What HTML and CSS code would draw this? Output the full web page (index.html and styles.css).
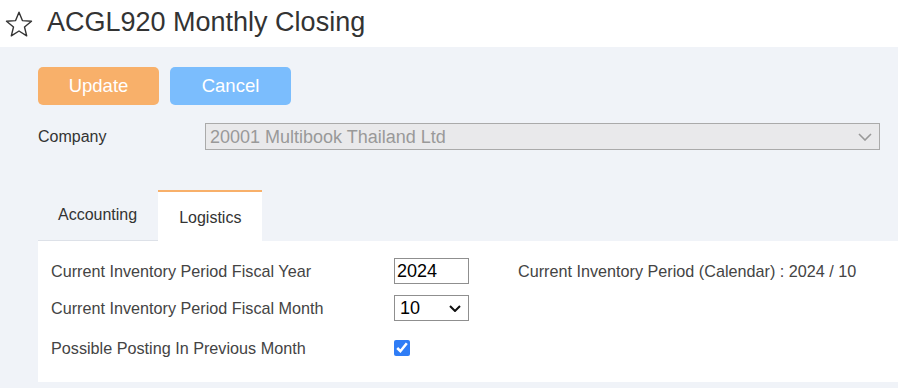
FILE: index.html
```html
<!DOCTYPE html>
<html lang="en">
<head>
    <meta charset="UTF-8">
    <title>ACGL920 Monthly Closing</title>
    <link rel="stylesheet" href="styles.css">
</head>
<body>
    <header class="page-header">
        <svg class="star" width="28" height="26" viewBox="0 0 28 26">
            <path d="M14 1.2 L17.4 9.6 L26.5 10.2 L19.5 16 L21.7 24.8 L14 20 L6.3 24.8 L8.5 16 L1.5 10.2 L10.6 9.6 Z" fill="none" stroke="#333" stroke-width="1.4" stroke-linejoin="round"/>
        </svg>
        <h1>ACGL920 Monthly Closing</h1>
    </header>

    <main class="content">
        <div class="toolbar">
            <button class="btn btn-update">Update</button>
            <button class="btn btn-cancel">Cancel</button>
        </div>

        <div class="company-row">
            <label class="company-label">Company</label>
            <div class="select-wrap company-wrap">
                <select class="company-select" disabled>
                    <option>20001 Multibook Thailand Ltd</option>
                </select>
                <svg class="chevron" width="14" height="8" viewBox="0 0 14 8">
                    <path d="M1 1 L7 7 L13 1" fill="none" stroke="#999" stroke-width="1.6"/>
                </svg>
            </div>
        </div>

        <div class="tabs">
            <div class="tab">Accounting</div>
            <div class="tab active">Logistics</div>
            <div class="tab-rest"></div>
        </div>

        <div class="panel">
            <div class="form-row">
                <span class="form-label">Current Inventory Period Fiscal Year</span>
                <input class="year-input" type="text" value="2024">
                <span class="calendar-info">Current Inventory Period (Calendar) : 2024 / 10</span>
            </div>
            <div class="form-row">
                <span class="form-label">Current Inventory Period Fiscal Month</span>
                <div class="select-wrap">
                    <select class="month-select">
                        <option>10</option>
                    </select>
                    <svg class="chevron month-chevron" width="12" height="7" viewBox="0 0 12 7">
                        <path d="M1 1 L6 6 L11 1" fill="none" stroke="#111" stroke-width="2"/>
                    </svg>
                </div>
            </div>
            <div class="form-row check-row">
                <span class="form-label">Possible Posting In Previous Month</span>
                <input class="posting-check" type="checkbox" checked>
            </div>
        </div>
    </main>
</body>
</html>
```

FILE: styles.css
```css
/* Reset */
body, h1 {
    margin: 0;
    padding: 0;
}

body {
    font-family: "Liberation Sans", Arial, sans-serif;
    color: #333;
    background-color: #f0f3f8;
    overflow: hidden;
}

/* Header */
.page-header {
    background-color: #fff;
    height: 47px;
    display: flex;
    align-items: center;
    padding-left: 5px;
}

.page-header h1 {
    font-size: 27px;
    font-weight: normal;
    color: #333;
    margin-left: 14px;
    margin-bottom: 2px;
}

/* Main area */
.content {
    padding: 20px 0 6px 38px;
}

.toolbar {
    display: flex;
    gap: 11px;
}

.btn {
    width: 121px;
    height: 38px;
    border: none;
    border-radius: 5px;
    color: #fff;
    font-family: "Liberation Sans", Arial, sans-serif;
    font-size: 18.5px;
    padding-top: 1px;
    cursor: pointer;
}

.btn-update {
    background-color: #f8b06a;
}

.btn-cancel {
    background-color: #7bbdfd;
}

.company-row {
    display: flex;
    align-items: center;
    margin-top: 18px;
    padding-right: 18px;
}

.company-label {
    width: 167px;
    font-size: 16px;
    color: #333;
}

/* Selects with drawn chevrons */
.select-wrap {
    position: relative;
    display: flex;
}

.company-wrap {
    flex: 1;
}

.chevron {
    position: absolute;
    top: 50%;
    pointer-events: none;
}

.company-wrap .chevron {
    right: 8px;
    margin-top: -4px;
}

.month-chevron {
    right: 8px;
    margin-top: -3px;
}

.company-select {
    appearance: none;
    width: 100%;
    height: 27px;
    border: 1px solid #aaa;
    border-radius: 0;
    background-color: #e9e9eb;
    color: #999;
    font-family: "Liberation Sans", Arial, sans-serif;
    font-size: 18px;
    padding-left: 4px;
    opacity: 1;
}

/* Tabs */
.tabs {
    display: flex;
    margin-top: 40px;
    height: 51px;
}

.tab {
    padding: 16px 21px 0 20px;
    font-size: 16px;
    border-bottom: 1px solid #dde1e8;
}

.tab.active {
    background-color: #fff;
    border-top: 2px solid #f8b06a;
    border-bottom: none;
    padding: 17px 21px 0;
}

.tab-rest {
    flex: 1;
}

.panel {
    background-color: #fff;
    height: 141px;
    padding: 17px 0 0 13px;
    box-sizing: border-box;
}

.form-row {
    display: flex;
    align-items: center;
    height: 26px;
    margin-bottom: 11px;
    font-size: 16.2px;
}

.check-row {
    margin-top: 14px;
}

.form-label {
    width: 343px;
    color: #444;
}

.year-input {
    width: 75px;
    height: 26px;
    box-sizing: border-box;
    border: 1px solid #8f8f8f;
    font-family: "Liberation Sans", Arial, sans-serif;
    font-size: 18px;
    color: #000;
    padding: 0 2px;
}

.calendar-info {
    margin-left: 49px;
    color: #444;
}

.month-select {
    appearance: none;
    width: 75px;
    height: 26px;
    border: 1px solid #8f8f8f;
    border-radius: 0;
    background-color: #fff;
    color: #000;
    font-family: "Liberation Sans", Arial, sans-serif;
    font-size: 18px;
    padding-left: 5px;
}

.posting-check {
    width: 16px;
    height: 16px;
    margin: 0;
    accent-color: #2f7df6;
}
```
